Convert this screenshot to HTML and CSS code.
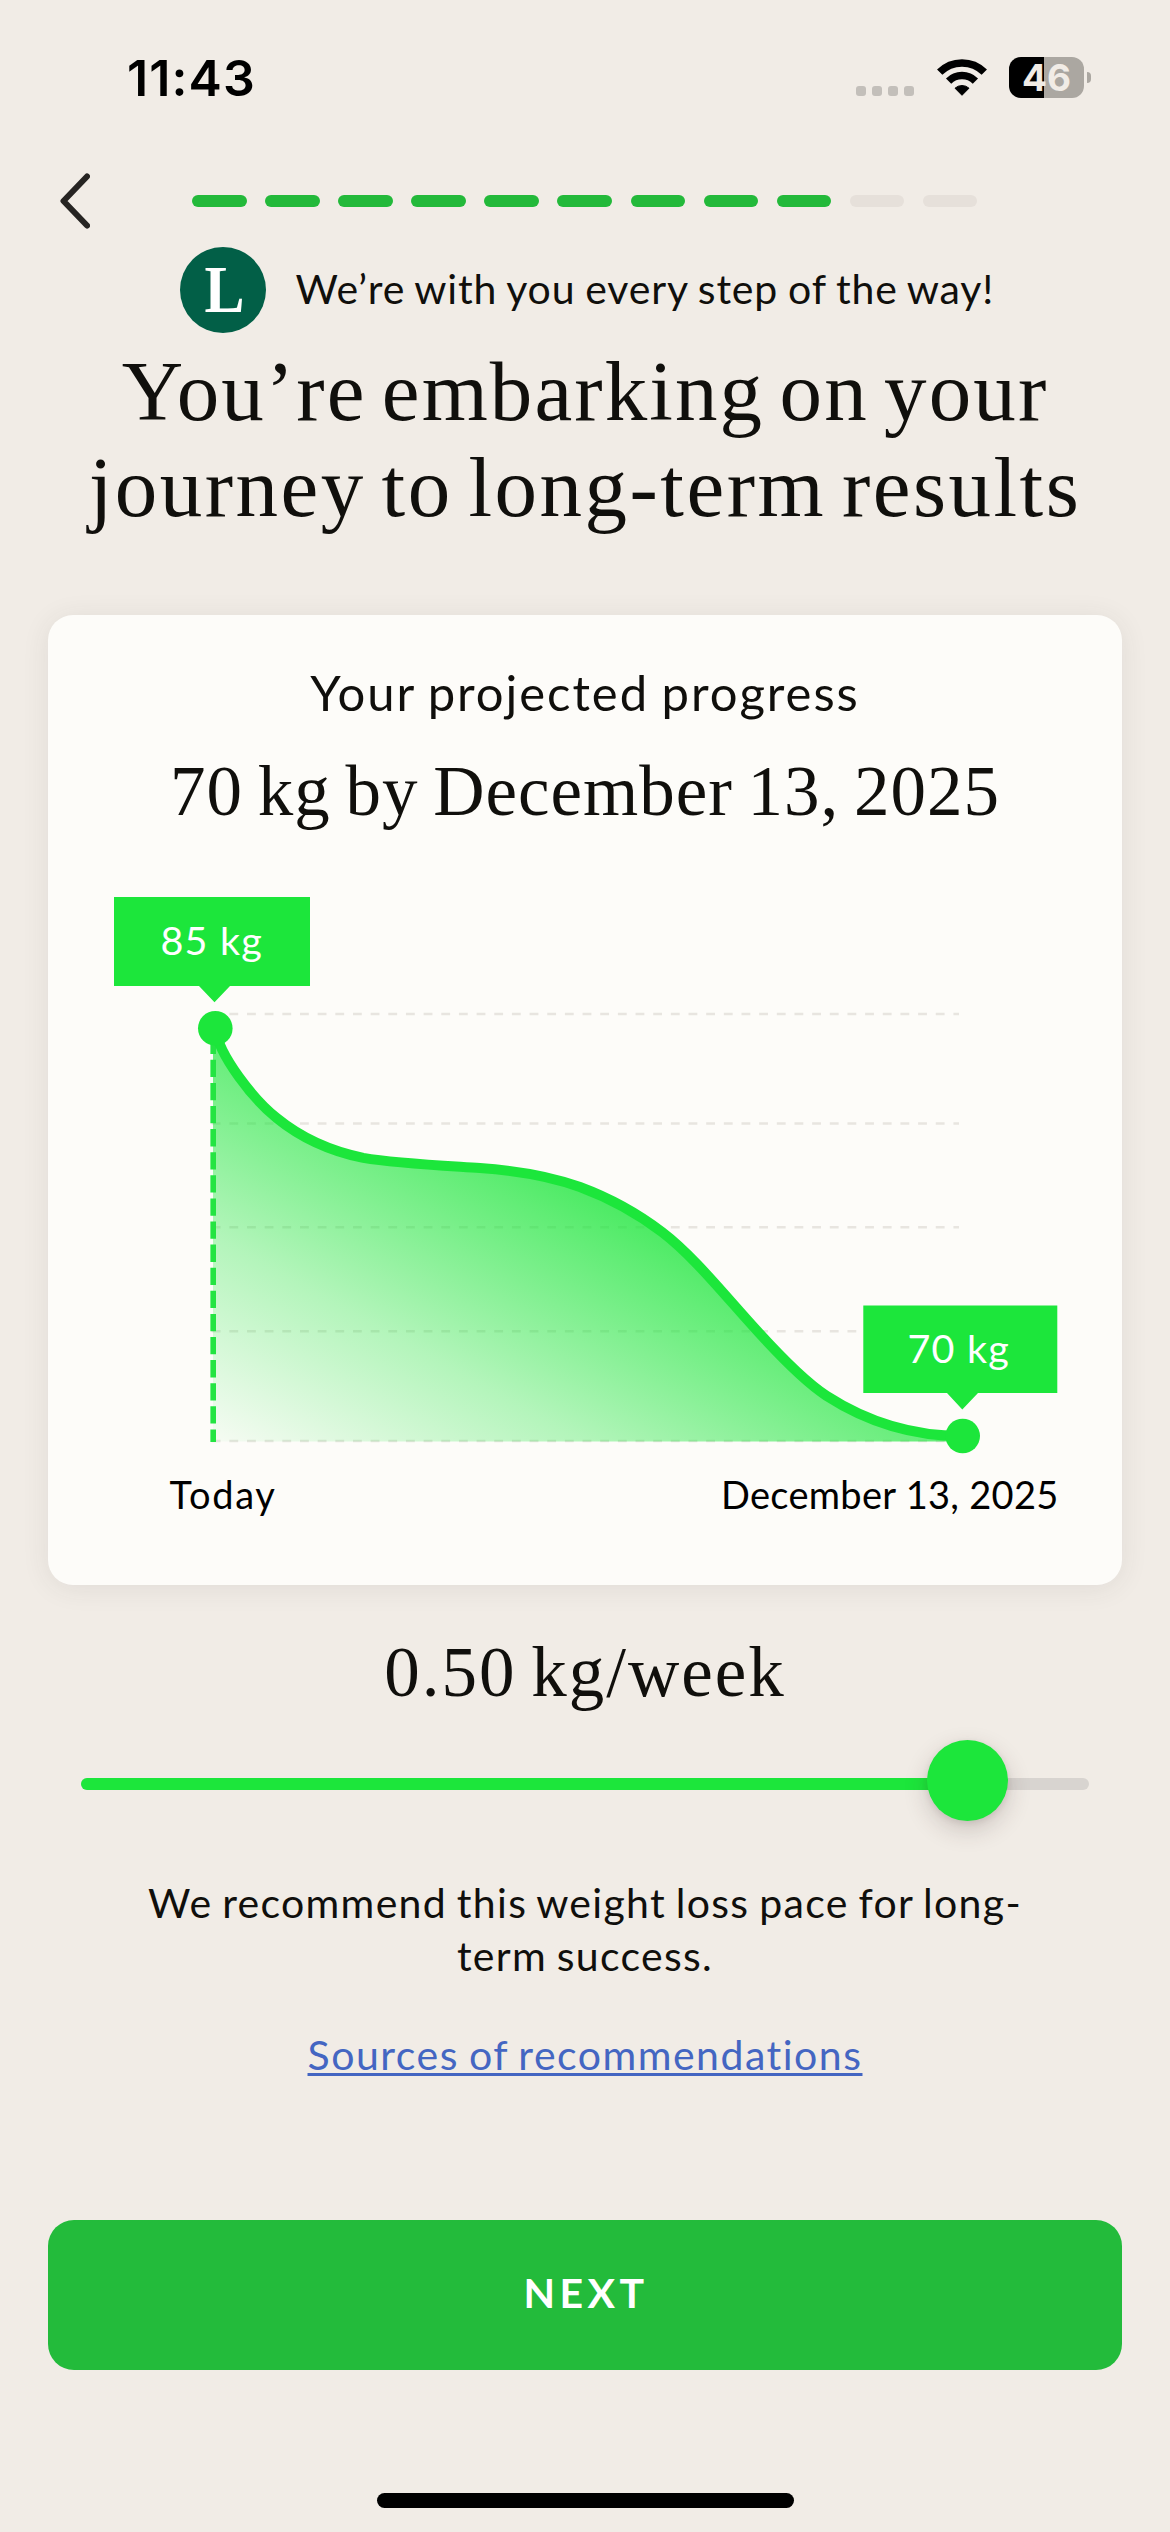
FILE: index.html
```html
<!DOCTYPE html>
<html lang="en">
<head>
<meta charset="utf-8">
<title>Projected progress</title>
<link rel="stylesheet" href="styles.css">
</head>
<body>
<div class="screen">
  <header class="status">
    <span class="time">11:43</span>
    <div class="status-icons">
      <div class="signal"><i></i><i></i><i></i><i></i></div>
      <svg class="wifi" viewBox="0 0 50 37" width="50" height="37">
        <path d="M2.7 13.2A31.5 31.5 0 0 1 47.3 13.2" fill="none" stroke="#000" stroke-width="7.5"/>
        <path d="M11.6 22.1A18.9 18.9 0 0 1 38.4 22.1" fill="none" stroke="#000" stroke-width="7.4"/>
        <path d="M18 29.2A10.5 10.5 0 0 1 32 29.2L25 36.3Z" stroke="#000" stroke-width="1" stroke-linejoin="round"/>
      </svg>
      <div class="battery"><span class="level">46</span><span class="nub"></span></div>
    </div>
  </header>

  <nav class="nav">
    <svg class="back" viewBox="0 0 30 56" width="30" height="56">
      <path d="M27 3.5L3.5 28L27 52.5" fill="none" stroke="#262422" stroke-width="6" stroke-linecap="round" stroke-linejoin="round"/>
    </svg>
    <div class="steps">
      <i class="done"></i><i class="done"></i><i class="done"></i><i class="done"></i><i class="done"></i><i class="done"></i><i class="done"></i><i class="done"></i><i class="done"></i><i></i><i></i>
    </div>
  </nav>

  <div class="tagline">
    <svg class="logo" viewBox="0 0 86 86" width="86" height="86">
      <circle cx="43" cy="43" r="43" fill="#025f47"/>
      <text class="logo-letter" x="24.5" y="64.5" textLength="40" lengthAdjust="spacingAndGlyphs">L</text>
    </svg>
    <span class="tagline-text">We’re with you every step of the way!</span>
  </div>

  <h1 class="headline"><span class="line-a">You’re embarking on your</span><br><span class="line-b">journey to long-term results</span></h1>

  <section class="card">
    <h2 class="card-title">Your projected progress</h2>
    <p class="goal">70 kg by December 13, 2025</p>
    <svg class="chart" viewBox="48 831 1074 754" width="1074" height="754">
      <defs>
        <linearGradient id="fill" x1="0" y1="1" x2="1" y2="0">
          <stop offset="0" stop-color="#1ce63b" stop-opacity=".03"/>
          <stop offset=".25" stop-color="#1ce63b" stop-opacity=".33"/>
          <stop offset=".5" stop-color="#1ce63b" stop-opacity=".7"/>
          <stop offset=".6" stop-color="#1ce63b" stop-opacity=".86"/>
        </linearGradient>
      </defs>
      <g class="grid">
        <path d="M211.7 1014H959"/>
        <path d="M211.7 1123.5H959"/>
        <path d="M211.7 1227.3H959"/>
        <path d="M211.7 1331.2H959"/>
        <path d="M211.7 1441H959"/>
      </g>
      <path fill="url(#fill)" d="M213 1028H215C219 1056 254 1100 276.7 1118C303 1139.5 334.5 1152 363.3 1157.9C396 1163.5 441 1165.5 480 1168C513 1170.3 547 1175 580 1187C607 1197 635 1211.5 662 1232C694 1256.3 726 1297 758.6 1332.4C781 1357 804 1381 826.4 1395.7C868 1422.5 915 1436 962 1436V1441.5H213Z"/>
      <path class="start" d="M213.2 1036.7V1442"/>
      <path class="curve" d="M215 1028C219 1056 254 1100 276.7 1118C303 1139.5 334.5 1152 363.3 1157.9C396 1163.5 441 1165.5 480 1168C513 1170.3 547 1175 580 1187C607 1197 635 1211.5 662 1232C694 1256.3 726 1297 758.6 1332.4C781 1357 804 1381 826.4 1395.7C868 1422.5 915 1436 962 1436"/>
      <circle class="mark" cx="215.3" cy="1028.3" r="17.3"/>
      <circle class="mark" cx="962.7" cy="1436" r="17.3"/>
      <path class="mark" d="M114 897H310V986H230L214.5 1002.3L199 986H114Z"/>
      <path class="mark" d="M863.3 1305.5H1057.3V1393H978L962.3 1409.6L947 1393H863.3Z"/>
      <text class="tip" x="160.5" y="955">85 kg</text>
      <text class="tip" x="907.5" y="1362.8">70 kg</text>
      <text class="axis today" x="169.5" y="1508.5">Today</text>
      <text class="axis" x="721" y="1508.5">December 13, 2025</text>
    </svg>
  </section>

  <p class="pace">0.50 kg/week</p>
  <div class="slider">
    <div class="slider-fill"></div>
    <div class="knob"></div>
  </div>
  <p class="advice">We recommend this weight loss pace for long-<br>term success.</p>
  <a class="sources">Sources of recommendations</a>
  <button class="next">NEXT</button>
  <div class="home"></div>
</div>
</body>
</html>
```

FILE: styles.css
```css
* { box-sizing: border-box; margin: 0; padding: 0; }

body {
  background: #f1ece6;
  color: #100f0c;
  font-family: Lato, "Open Sans", sans-serif;
  font-kerning: normal;
}

.screen {
  width: 1170px;
  height: 2532px;
  display: flex;
  flex-direction: column;
  align-items: center;
  overflow: hidden;
}

/* status bar */
.status {
  width: 100%;
  height: 155px;
  padding: 0 79px 0 127px;
  display: flex;
  align-items: center;
  justify-content: space-between;
  color: #000;
  font-family: Inter, sans-serif;
}
.time { font-size: 50px; line-height: 60px; font-weight: 600; letter-spacing: 1.1px; }
.status-icons { display: flex; align-items: center; }
.signal { display: flex; gap: 6px; margin: 27px 22.5px 0 0; }
.signal i { width: 10px; height: 10px; border-radius: 3px; background: #c3bfba; }
.wifi { display: block; margin-right: 22.5px; }
.battery { display: flex; align-items: center; gap: 3px; }
.level {
  width: 75px;
  height: 41px;
  border-radius: 12px;
  background: linear-gradient(90deg, #000 35px, #aba7a1 35px);
  color: #f1ece6;
  font-size: 37px;
  line-height: 41px;
  font-weight: 700;
  text-align: center;
}
.nub { width: 4px; height: 11px; border-radius: 0 4px 4px 0; background: #aba7a1; }

/* navigation */
.nav {
  width: 100%;
  height: 92px;
  padding-left: 60px;
  display: flex;
  align-items: center;
  gap: 102px;
}
.steps { display: flex; gap: 18.6px; }
.steps i { width: 54.5px; height: 12px; border-radius: 6px; background: #e6e0da; }
.steps .done { background: #23b93a; }

/* tagline */
.tagline { width: 100%; height: 86px; padding-left: 179.5px; display: flex; align-items: center; gap: 30px; }
.logo { display: block; }
.logo-letter { font: 700 68px "Liberation Serif", serif; fill: #fff; }
.tagline-text { font-size: 41px; line-height: 50px; letter-spacing: .85px; word-spacing: -1.5px; padding-bottom: 3px; white-space: nowrap; }

.headline {
  margin-top: 10px;
  font: 400 85px/96px "Liberation Serif", serif;
  word-spacing: -8px;
  text-align: center;
  white-space: nowrap;
}
.line-a { letter-spacing: 2.1px; }
.line-b { letter-spacing: 2.5px; }

/* projection card */
.card {
  width: 1074px;
  height: 970px;
  margin-top: 80px;
  padding-top: 47px;
  border-radius: 25px;
  background: #fdfcf9;
  box-shadow: 0 3px 28px rgba(60, 50, 50, .09);
  text-align: center;
}
.card-title { font-size: 49px; line-height: 60px; font-weight: 400; letter-spacing: 1.95px; word-spacing: -2px; }
.goal { margin-top: 29px; font: 400 71px/80px "Liberation Serif", serif; letter-spacing: 1px; word-spacing: -4px; }
.chart { display: block; }
.grid path { stroke: #e8e5e0; stroke-width: 2.6; stroke-dasharray: 8.83 8.83; }
.start { stroke: #24e442; stroke-width: 5.6; stroke-dasharray: 17.3 5.8; fill: none; }
.curve { stroke: #1ce63b; stroke-width: 10; fill: none; stroke-linecap: round; }
.mark { fill: #1ce63b; }
.tip { font-size: 39.5px; letter-spacing: 1.2px; fill: #fff; }
.axis { font-size: 38px; letter-spacing: .3px; fill: #000; }
.today { letter-spacing: 1.7px; }

/* pace */
.pace { margin-top: 47px; font: 400 71px/80px "Liberation Serif", serif; letter-spacing: 2px; word-spacing: -5px; }
.slider {
  position: relative;
  width: 1008px;
  height: 12px;
  margin-top: 66px;
  border-radius: 6px;
  background: #d8d4d0;
}
.slider-fill { width: 886px; height: 12px; border-radius: 6px; background: #1ce63b; }
.knob {
  position: absolute;
  left: 846px;
  top: -38px;
  width: 81px;
  height: 81px;
  border-radius: 50%;
  background: #1ce63b;
  box-shadow: 0 9px 24px rgba(60, 40, 40, .2), 0 2px 6px rgba(60, 40, 40, .1);
}

.advice { margin-top: 86px; font-size: 41px; line-height: 53px; letter-spacing: 1.3px; word-spacing: -2px; text-align: center; white-space: nowrap; }
.sources {
  margin-top: 46px;
  font-size: 41px;
  line-height: 53px;
  letter-spacing: 1.5px;
  word-spacing: -2px;
  color: #4466c2;
  text-decoration: underline;
  text-decoration-thickness: 3px;
  text-underline-offset: 3px;
  text-decoration-skip-ink: none;
}

.next {
  width: 1074px;
  height: 150px;
  margin-top: 139px;
  padding: 0 0 5px 2px;
  border: 0;
  border-radius: 26px;
  background: #23bb3b;
  color: #fff;
  font: 700 41px/50px Lato, "Open Sans", sans-serif;
  letter-spacing: 4.4px;
}
.home { width: 417px; height: 15px; margin-top: 123px; border-radius: 8px; background: #000; }
```
